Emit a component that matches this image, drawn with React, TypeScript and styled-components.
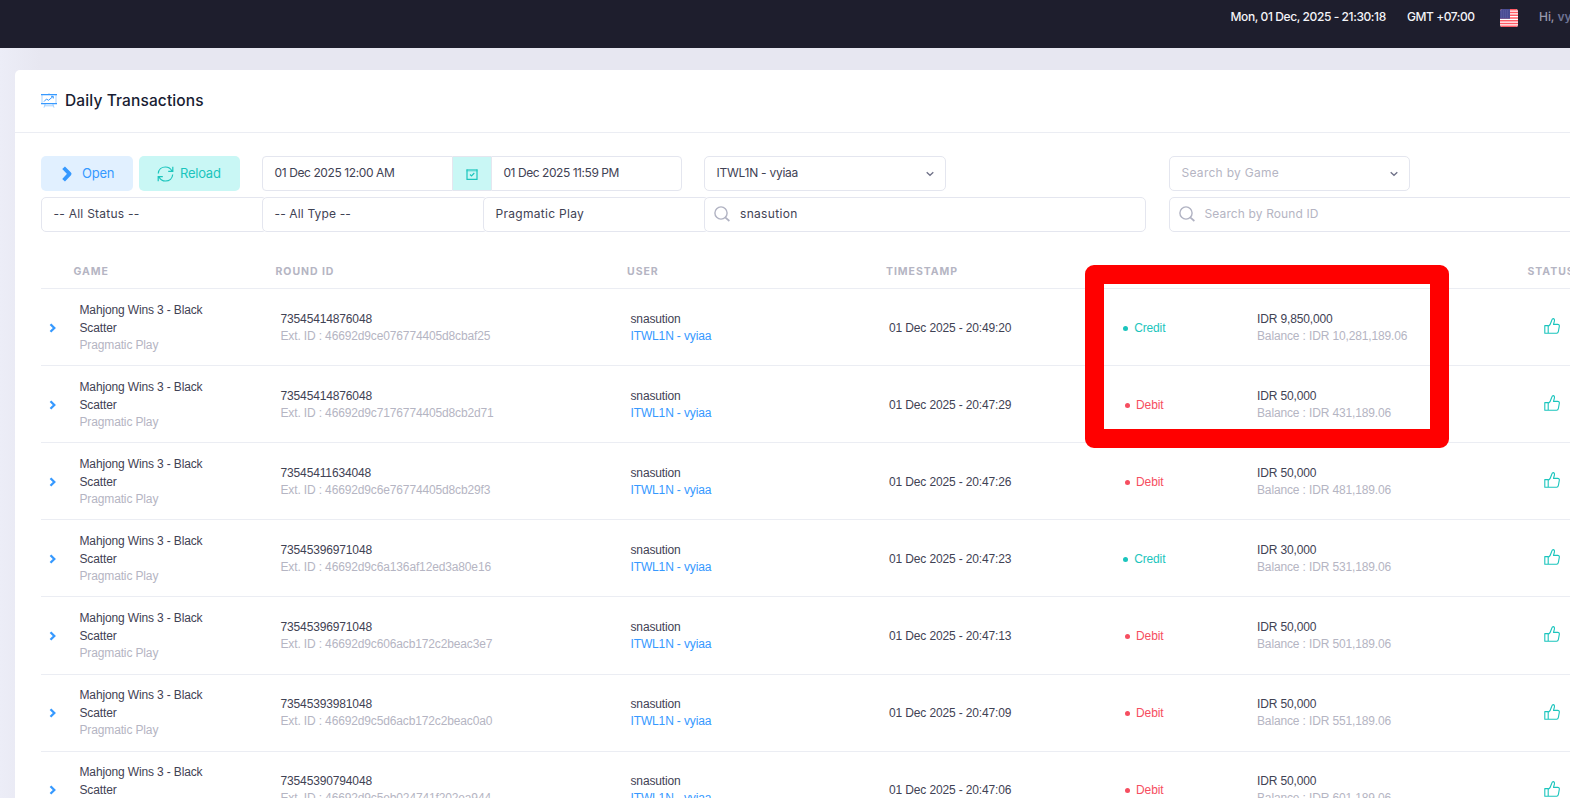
import React from 'react';
import styled, { createGlobalStyle } from 'styled-components';

const ui = `Inter, "Open Sans", sans-serif`;

const Global = createGlobalStyle`
  * { box-sizing: border-box; }
  html, body { margin: 0; width: 1570px; height: 798px; overflow: hidden; }
  body { background: #ebecf5; font-family: ${ui}; font-size: 13px; color: #3f4254; }
`;

const Page = styled.div`
  width: 1570px; height: 798px; overflow: hidden; position: relative;
  display: flex; flex-direction: column;
  background: linear-gradient(90deg, #ecedf7 0, #e7e7f1 40px);
`;
const TopBar = styled.header`
  height: 48px; flex: none; background: #1e1e2d; padding: 9px 0 0 1230.5px;
  display: flex; align-items: flex-start; white-space: nowrap; color: #f4f4f8;
  line-height: 16px; font-weight: 500; font-size: 12px;
`;
const Clock = styled.span<{ $w: number; $ls: number }>`
  flex: none; width: ${p => p.$w}px; letter-spacing: ${p => p.$ls}px;
`;
const Flag = styled.svg`flex: none; display: block; margin-right: 21px;`;
const Greeting = styled.span`
  color: #9899ac; letter-spacing: -0.05px;
  b { font-weight: 600; color: #6d7394; }
`;

const Card = styled.main`
  margin: 22px 0 0 15px; flex: 1; min-height: 0; width: 1700px; background: #fff;
  border-radius: 5px 0 0 0; display: flex; flex-direction: column;
`;
const CardHead = styled.div`
  height: 63px; flex: none; border-bottom: 1px solid #ebedf3; padding: 0 0 1px 26px;
  display: flex; align-items: center; gap: 8px;
`;
const Title = styled.h1`
  margin: 0; font-size: 15.5px; font-weight: 500; color: #181c32; letter-spacing: 0.12px; line-height: 22px;
`;
const Filters = styled.div`padding: 23px 0 0 26px; display: flex; flex-direction: column; gap: 6px;`;
const FilterRow = styled.div`display: flex; height: 35px;`;
const Button = styled.button<{ $tone: 'blue' | 'teal'; $w: number }>`
  flex: none; width: ${p => p.$w}px; height: 35px; margin: 0 ${p => (p.$tone === 'blue' ? 6 : 22)}px 0 0;
  padding: 0 0 1px ${p => (p.$tone === 'blue' ? 21 : 18)}px;
  border: 0; border-radius: 5px; display: flex; align-items: center;
  gap: ${p => (p.$tone === 'blue' ? 9 : 6)}px; font: 400 13px ${ui}; letter-spacing: -0.25px;
  background: ${p => (p.$tone === 'blue' ? '#e1f0ff' : '#c9f7f5')};
  color: ${p => (p.$tone === 'blue' ? '#3699ff' : '#1bc5bd')};
  svg { position: relative; top: 1px; }
`;
const Field = styled.div<{ $w: number; $ml?: number; $muted?: boolean; $ls?: number; $r?: string }>`
  flex: none; width: ${p => p.$w}px; margin-left: ${p => p.$ml ?? 0}px; height: 35px;
  border: 1px solid #e4e6ef; border-radius: ${p => p.$r ?? '5px'}; background: #fff;
  padding: 0 11.5px 2px; display: flex; align-items: center; white-space: pre; font-size: 12px;
  letter-spacing: ${p => p.$ls ?? 0.25}px; color: ${p => (p.$muted ? '#b5b5c3' : '#3f4254')};
`;
const SearchField = styled(Field)`padding-left: 9px; gap: 10px;`;
const DateAddon = styled.div`
  flex: none; width: 38.5px; height: 35px; background: #c9f7f5; border: solid #e4e6ef; border-width: 1px 0;
  display: flex; align-items: center; justify-content: center;
`;

const Table = styled.div`margin: 22px 0 0 26px; width: 1620px;`;
const HeadRow = styled.div`
  display: grid; grid-template-columns: 32.5px 202px 351.5px 259px 641.5px 100px;
  height: 35px; line-height: 35px; border-bottom: 1px solid #ebedf3; color: #b5b5c3;
  font-size: 10.5px; font-weight: 700; letter-spacing: 0.95px;
`;
const Row = styled.div`
  display: grid; grid-template-columns: 38px 201px 350px 258.5px 187.5px 180.5px 287px 60px; align-items: center;
  height: 77.12px; border-bottom: 1px solid #ebedf3;
  font: 400 12px/18px "Liberation Sans", Arial, sans-serif; letter-spacing: -0.14px; white-space: nowrap;
`;
const Expand = styled.svg`display: block; margin: 1px 0 0 8px;`;
const Cell = styled.div<{ $drop?: boolean }>`padding: ${p => (p.$drop ? '1.4px' : '0')} 0 0 0.5px;`;
const Line = styled.div<{ $tone?: 'muted' | 'link' }>`
  line-height: ${p => (p.$tone ? 17 : 18)}px;
  color: ${p => (p.$tone === 'muted' ? '#b5b5c3' : p.$tone === 'link' ? '#3699ff' : '#3f4254')};
`;
const Kind = styled.div<{ $credit: boolean }>`
  width: 136px; padding-top: 1.4px; display: flex; justify-content: center; align-items: center; gap: 6.5px;
  color: ${p => (p.$credit ? '#1bc5bd' : '#f64e60')};
  &::before { content: ''; width: 5px; height: 5px; margin-top: 1px; border-radius: 50%; background: currentColor; }
`;
const Highlight = styled.div`
  position: absolute; left: 1085px; top: 265px; width: 364px; height: 183px;
  border: 19px solid #f00; border-radius: 9px;
`;

const SearchIcon = () => (
  <svg width="16" height="16" viewBox="0 0 16 16" fill="none" stroke="#b0b2c2">
    <circle cx="7" cy="7" r="6.1" strokeWidth="1.4" /><path d="M11.2 11.3 15.4 15" strokeWidth="1.7" />
  </svg>
);
const CaretSvg = styled.svg`margin-left: auto; position: relative; top: 1px;`;
const Caret = () => (
  <CaretSvg width="8" height="6" viewBox="0 0 8 6" fill="none" stroke="#6f7188" strokeWidth="1.3">
    <path d="M.7 1.2 4 4.3l3.3-3.1" />
  </CaretSvg>
);
const Thumb = styled.svg`display: block; margin-top: -2px;`;
const ThumbUp = () => (
  <Thumb width="16" height="16" viewBox="0 0 16 16" fill="none" stroke="#1bc5bd" strokeWidth="1.1" strokeLinejoin="round">
    <path d="M.8 7.6h3.4v7.6H.8zM4.2 8.4C6.1 7.3 6.9 5.4 7.5 3 7.9 1.4 8.2.6 9.1.6c1.3 0 1.6 1.5 1.2 2.9l-.8 2.9h4.2c1.1 0 1.8.8 1.6 1.9l-.9 5c-.2 1.2-.8 1.9-1.8 1.9H4.2" />
  </Thumb>
);

const rows = [
  ['73545414876048', '46692d9ce076774405d8cbaf25', '20:49:20', 'Credit', '9,850,000', '10,281,189.06'],
  ['73545414876048', '46692d9c7176774405d8cb2d71', '20:47:29', 'Debit', '50,000', '431,189.06'],
  ['73545411634048', '46692d9c6e76774405d8cb29f3', '20:47:26', 'Debit', '50,000', '481,189.06'],
  ['73545396971048', '46692d9c6a136af12ed3a80e16', '20:47:23', 'Credit', '30,000', '531,189.06'],
  ['73545396971048', '46692d9c606acb172c2beac3e7', '20:47:13', 'Debit', '50,000', '501,189.06'],
  ['73545393981048', '46692d9c5d6acb172c2beac0a0', '20:47:09', 'Debit', '50,000', '551,189.06'],
  ['73545390794048', '46692d9c5eb024741f202ea944', '20:47:06', 'Debit', '50,000', '601,189.06'],
];

export default function App() {
  return (
    <Page>
      <Global />
      <TopBar>
        <Clock $w={176.5} $ls={-0.41}>Mon, 01 Dec, 2025 - 21:30:18</Clock>
        <Clock $w={93} $ls={-0.45}>GMT +07:00</Clock>
        <Flag width="18" height="18" viewBox="0 0 18 18">
          <defs><clipPath id="flag"><rect width="18" height="18" rx="2.5" /></clipPath></defs>
          <g clipPath="url(#flag)">
            <path fill="#fff" d="M0 0h18v18H0z" />
            <path stroke="#ff5a64" strokeWidth="1.4" d="M0 .7h18M0 3.5h18M0 6.2h18M0 9h18M0 11.8h18M0 14.5h18M0 17.3h18" />
            <path fill="#4a4c94" d="M0 0h10v9.7H0z" />
            <path stroke="#7375b3" strokeWidth=".7" strokeDasharray=".8 1.2" d="M1 2h8M1 4h8M1 6h8M1 8h8" />
          </g>
        </Flag>
        <Greeting>Hi, <b>vyiaa</b></Greeting>
      </TopBar>
      <Card>
        <CardHead>
          <svg width="16" height="15" viewBox="0 0 16 15" fill="none" stroke="#3699ff">
            <path strokeWidth="1.2" d="M0 1.6h16M0 10.6h16" />
            <path strokeWidth=".8" opacity=".55" d="M1 1.5v9M15 1.5v9M8 0v1M4.3 10.5 3 14.7M11.7 10.5l1.3 4.2M3.8 12.8h8.4" />
            <path strokeWidth="1" d="M3 8.6 5.5 6l2 1.3L12 3.5M10 3.3h2.3v2.2" />
          </svg>
          <Title>Daily Transactions</Title>
        </CardHead>
        <Filters>
          <FilterRow>
            <Button $tone="blue" $w={92}>
              <svg width="11" height="16" viewBox="0 0 11 16" fill="none" stroke="#3699ff" strokeWidth="3.8"><path d="m1.6 1.7 6 6.2-6 6.3" strokeLinejoin="round" /></svg>
              Open
            </Button>
            <Button $tone="teal" $w={101}>
              <svg width="17" height="16" viewBox="0 0 17 16" fill="none" stroke="#1bc5bd" strokeWidth="1.2">
                <path d="M1.3 7.5C1.6 3.6 4.6 1 8.4 1c3 0 5.3 1.500 6.500 4.100M15.800 .8v4.500h-4.600M15.700 8.500c-.3 3.900-3.300 6.500-7.100 6.500-3 0-5.300-1.500-6.500-4.100M1.200 15.200v-4.500h4.600" />
              </svg>
              Reload
            </Button>
            <Field $w={190.5} $ls={-0.4} $r="4px 0 0 4px">01 Dec 2025 12:00 AM</Field>
            <DateAddon>
              <svg width="12" height="12" viewBox="0 0 12 12" fill="none" stroke="#1bc5bd">
                <path strokeWidth="1.2" d="M1 1.5v9.8h10V1.5" /><path opacity=".6" strokeWidth="2.4" d="M.5 2.2h11" /><path strokeWidth="1.1" d="m4 6.5 1.5 1.4L8.3 5" />
              </svg>
            </DateAddon>
            <Field $w={191} $ls={-0.45} $r="0 4px 4px 0">01 Dec 2025 11:59 PM</Field>
            <Field $w={242} $ml={22} $ls={-0.25}>ITWL1N - vyiaa<Caret /></Field>
            <Field $w={241} $ml={223} $muted $ls={0.28}>Search by Game<Caret /></Field>
          </FilterRow>
          <FilterRow>
            <Field $w={226}>-- All Status --</Field>
            <Field $w={226} $ml={-5} $ls={0.15}>-- All Type --</Field>
            <Field $w={226} $ml={-5} $ls={0.3}>Pragmatic Play</Field>
            <SearchField $w={442} $ml={-5} $ls={0.32}><SearchIcon />snasution</SearchField>
            <SearchField $w={442} $ml={22.5} $muted $ls={0.12}><SearchIcon />Search by Round ID</SearchField>
          </FilterRow>
        </Filters>
        <Table>
          <HeadRow>
            <span /><span>GAME</span><span>ROUND ID</span><span>USER</span><span>TIMESTAMP</span><span>STATUS</span>
          </HeadRow>
          {rows.map(([round, ext, time, kind, amount, balance]) => (
            <Row key={ext}>
              <Expand width="8" height="10" viewBox="0 0 8 10" fill="none" stroke="#3699ff" strokeWidth="2.3"><path d="m1.500 1.200 3.800 3.800-3.800 3.800" /></Expand>
              <Cell>
                <Line>Mahjong Wins 3 - Black</Line><Line>Scatter</Line><Line $tone="muted">Pragmatic Play</Line>
              </Cell>
              <Cell><Line>{round}</Line><Line $tone="muted">Ext. ID : {ext}</Line></Cell>
              <Cell><Line>snasution</Line><Line $tone="link">ITWL1N - vyiaa</Line></Cell>
              <Cell $drop><Line>01 Dec 2025 - {time}</Line></Cell>
              <Kind $credit={kind === 'Credit'}>{kind}</Kind>
              <Cell><Line>IDR {amount}</Line><Line $tone="muted">Balance : IDR {balance}</Line></Cell>
              <ThumbUp />
            </Row>
          ))}
        </Table>
      </Card>
      <Highlight />
    </Page>
  );
}
